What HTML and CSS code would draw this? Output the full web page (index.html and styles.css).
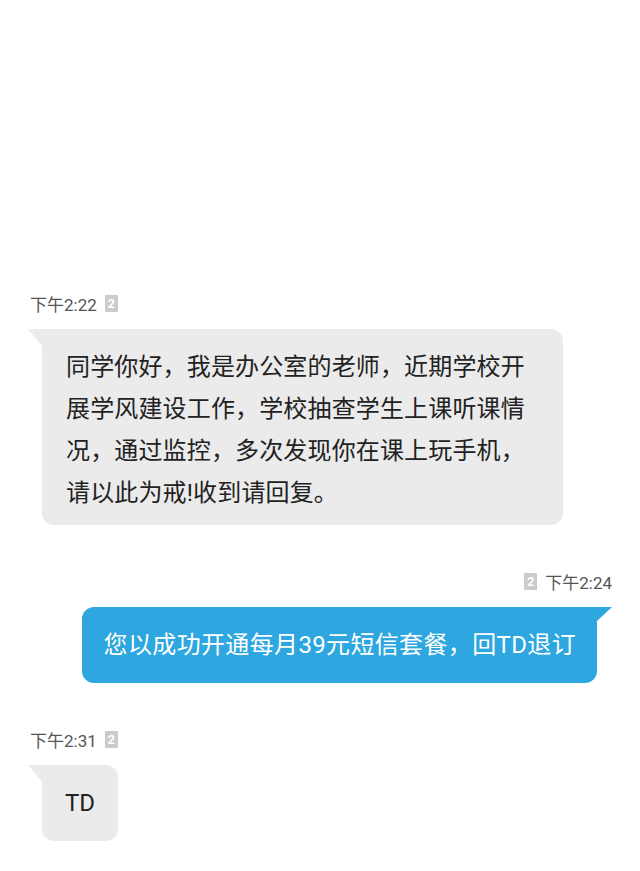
FILE: index.html
```html
<!DOCTYPE html>
<html lang="zh-CN">
<head>
    <meta charset="utf-8">
    <meta name="viewport" content="width=device-width, initial-scale=1">
    <title>短信</title>
    <link rel="stylesheet" href="styles.css">
</head>
<body>

<div class="thread">
    <div class="msg in">
        <div class="meta"><span class="time">下午2:22</span><span class="sim">2</span></div>
        <div class="bubble wide">同学你好，我是办公室的老师，近期学校开展学风建设工作，学校抽查学生上课听课情况，通过监控，多次发现你在课上玩手机，请以此为戒!收到请回复。</div>
    </div>

    <div class="msg out">
        <div class="meta"><span class="sim">2</span><span class="time">下午2:24</span></div>
        <div class="bubble">您以成功开通每月39元短信套餐，回TD退订</div>
    </div>

    <div class="msg in">
        <div class="meta"><span class="time">下午2:31</span><span class="sim">2</span></div>
        <div class="bubble">TD</div>
    </div>
</div>

</body>
</html>
```

FILE: styles.css
```css
body {
    margin: 0;
    background: #ffffff;
    font-family: Roboto, "Noto Sans CJK SC", sans-serif;
}

.thread {
    display: flex;
    flex-direction: column;
    padding: 291px 0 0 0;
}

.msg {
    display: flex;
    flex-direction: column;
    margin-bottom: 44px;
}

.msg.in {
    align-items: flex-start;
    padding-left: 30px;
}

.msg.out {
    align-items: flex-end;
    padding-right: 28px;
}

.meta {
    display: flex;
    align-items: center;
    gap: 8px;
    height: 24px;
    margin-bottom: 14px;
}

.time {
    font-size: 17px;
    color: #555555;
}

.sim {
    width: 13px;
    height: 17px;
    background: #cbcbcb;
    color: #ffffff;
    font-size: 13px;
    font-weight: bold;
    line-height: 17px;
    text-align: center;
}

.bubble {
    position: relative;
    font-size: 24px;
    line-height: 42px;
    padding: 17px 23px;
    border-radius: 12px;
}

.msg.in .bubble {
    margin-left: 12px;
    background: #ebebeb;
    color: #222222;
    border-top-left-radius: 0;
}

.msg.out .bubble {
    margin-right: 15px;
    background: #2ea7e0;
    color: #ffffff;
    padding: 17px 21px 17px 22px;
    letter-spacing: 0.35px;
    border-top-right-radius: 0;
}

.bubble.wide {
    width: 473px;
    padding: 17px 24px 11px 24px;
    letter-spacing: 0.15px;
}

.msg.in .bubble::before {
    content: "";
    position: absolute;
    left: -14px;
    top: 0;
    width: 14px;
    height: 17px;
    background: #ebebeb;
    clip-path: polygon(0 0, 100% 0, 100% 100%);
}

.msg.out .bubble::after {
    content: "";
    position: absolute;
    right: -15px;
    top: 0;
    width: 15px;
    height: 14px;
    background: #2ea7e0;
    clip-path: polygon(0 0, 100% 0, 0 100%);
}
```
